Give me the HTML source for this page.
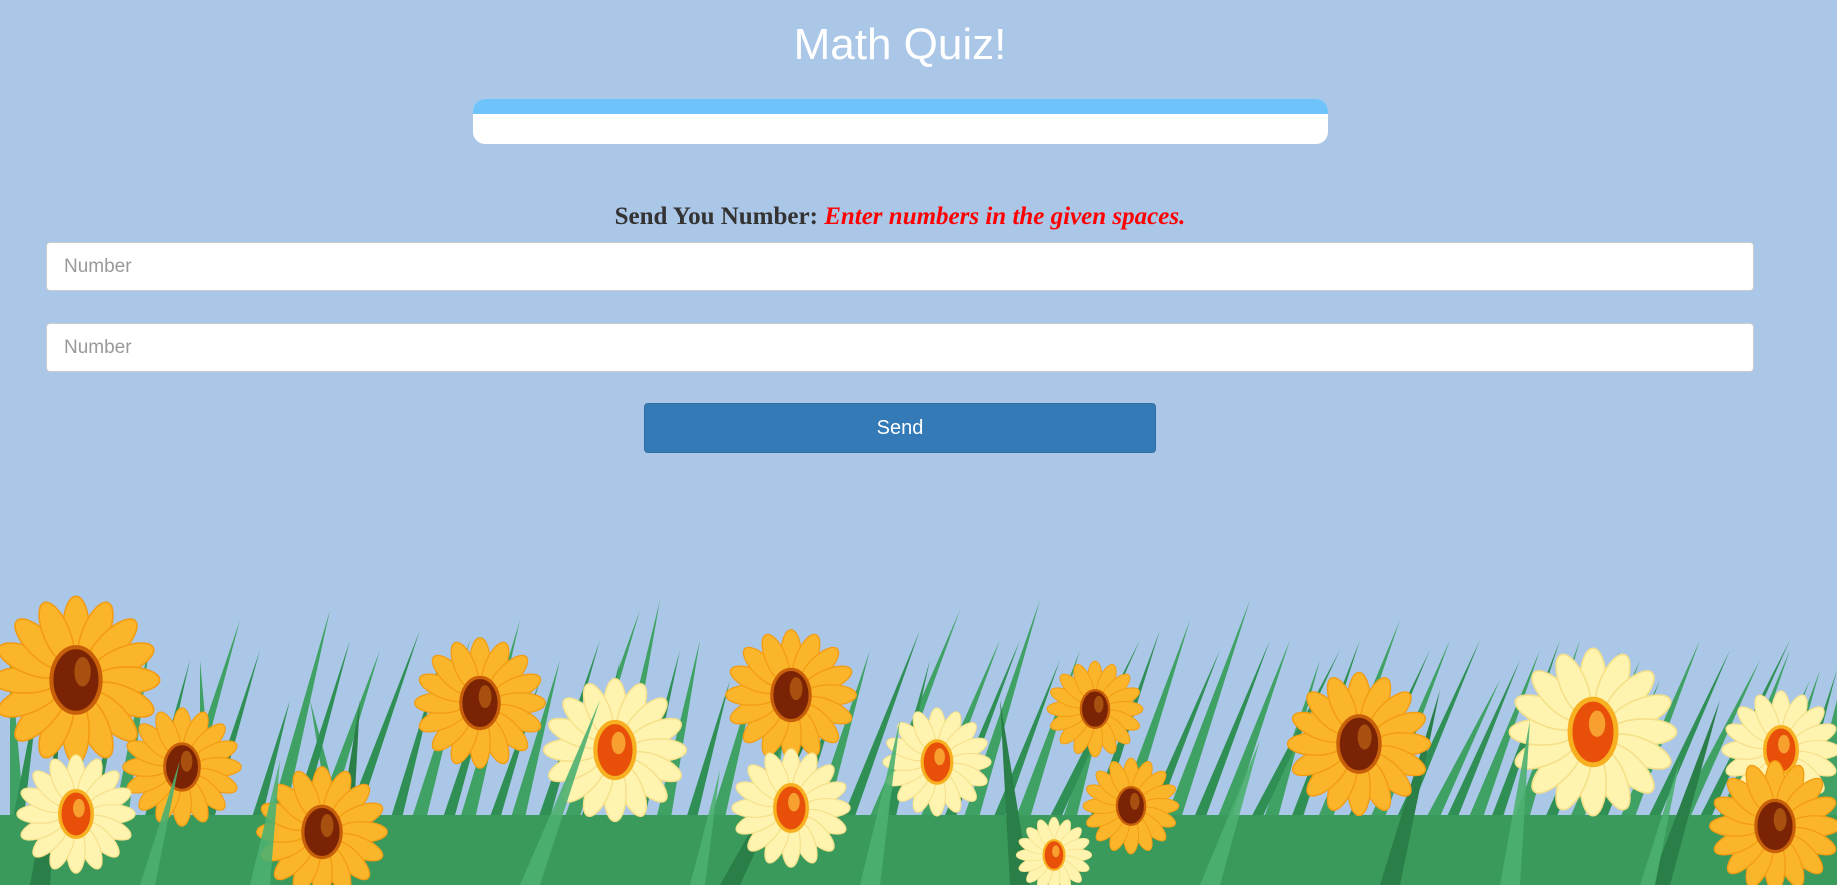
<!DOCTYPE html>
<html><head><meta charset="utf-8"><style>
html,body{margin:0;padding:0;}
body{width:1837px;height:885px;background:#abc7e8;position:relative;overflow:hidden;font-family:"Liberation Sans",Arial,sans-serif;}
h1{position:absolute;left:0;width:1800px;top:20px;margin:0;text-align:center;font-weight:normal;font-size:44px;color:#fff;line-height:50px;}
.bar{position:absolute;left:473px;top:99px;width:855px;height:45px;background:#fff;border-radius:12px;overflow:hidden;}
.bar div{height:15px;background:#6fc3fb;}
.lab{position:absolute;left:0;width:1800px;top:203px;text-align:center;font-family:"Liberation Serif",Georgia,serif;font-weight:bold;font-size:25px;color:#333;}
.lab i{color:#f00;}
.in{position:absolute;left:46px;width:1708px;height:49px;background:#fff;border:1px solid #ccc;border-radius:4px;box-sizing:border-box;font-size:19px;color:#999;padding-left:17px;line-height:47px;}
.btn{position:absolute;left:644px;top:403px;width:512px;height:50px;background:#337ab7;border:1px solid #2e6da4;border-radius:4px;box-sizing:border-box;color:#fff;font-size:20px;text-align:center;line-height:48px;}
svg{position:absolute;left:0;top:0;}
</style></head><body>
<h1>Math Quiz!</h1>
<div class="bar"><div></div></div>
<div class="lab">Send You Number: <i>Enter numbers in the given spaces.</i></div>
<div class="in" style="top:242px">Number</div>
<div class="in" style="top:323px">Number</div>
<div class="btn">Send</div>
<svg width="1837" height="885" viewBox="0 0 1837 885">
<defs>
<ellipse id="pY" cx="0" cy="-0.62" rx="0.16" ry="0.4" fill="#fbb52a" stroke="#f39c12" stroke-width="0.02"/>
<ellipse id="pW" cx="0" cy="-0.62" rx="0.16" ry="0.4" fill="#fff3b0" stroke="#f5e08a" stroke-width="0.02"/>
<g id="sun">
<use href="#pY"/><use href="#pY" transform="rotate(22.5)"/><use href="#pY" transform="rotate(45)"/><use href="#pY" transform="rotate(67.5)"/><use href="#pY" transform="rotate(90)"/><use href="#pY" transform="rotate(112.5)"/><use href="#pY" transform="rotate(135)"/><use href="#pY" transform="rotate(157.5)"/><use href="#pY" transform="rotate(180)"/><use href="#pY" transform="rotate(202.5)"/><use href="#pY" transform="rotate(225)"/><use href="#pY" transform="rotate(247.5)"/><use href="#pY" transform="rotate(270)"/><use href="#pY" transform="rotate(292.5)"/><use href="#pY" transform="rotate(315)"/><use href="#pY" transform="rotate(337.5)"/>
<ellipse rx="0.3" ry="0.4" fill="#7a2405" stroke="#c8600a" stroke-width="0.05"/>
<ellipse cx="0.08" cy="-0.1" rx="0.1" ry="0.18" fill="#a8500f"/>
</g>
<g id="dai">
<use href="#pW"/><use href="#pW" transform="rotate(22.5)"/><use href="#pW" transform="rotate(45)"/><use href="#pW" transform="rotate(67.5)"/><use href="#pW" transform="rotate(90)"/><use href="#pW" transform="rotate(112.5)"/><use href="#pW" transform="rotate(135)"/><use href="#pW" transform="rotate(157.5)"/><use href="#pW" transform="rotate(180)"/><use href="#pW" transform="rotate(202.5)"/><use href="#pW" transform="rotate(225)"/><use href="#pW" transform="rotate(247.5)"/><use href="#pW" transform="rotate(270)"/><use href="#pW" transform="rotate(292.5)"/><use href="#pW" transform="rotate(315)"/><use href="#pW" transform="rotate(337.5)"/>
<ellipse rx="0.28" ry="0.4" fill="#e8500a" stroke="#f7b020" stroke-width="0.06"/>
<ellipse cx="0.05" cy="-0.1" rx="0.1" ry="0.16" fill="#f7a030"/>
</g>
</defs>
<g fill="#3fa163">
<polygon points="10,885 10,650 30,885"/><polygon points="50,885 90,700 70,885"/><polygon points="100,885 150,640 120,885"/><polygon points="150,885 240,620 170,885"/><polygon points="200,885 200,660 220,885"/><polygon points="250,885 330,610 270,885"/><polygon points="290,885 380,650 310,885"/><polygon points="340,885 310,700 360,885"/><polygon points="390,885 470,640 410,885"/><polygon points="440,885 520,620 460,885"/><polygon points="490,885 560,660 510,885"/><polygon points="540,885 640,610 560,885"/><polygon points="590,885 660,600 610,885"/><polygon points="640,885 700,640 660,885"/><polygon points="690,885 760,660 710,885"/><polygon points="740,885 790,700 760,885"/><polygon points="790,885 870,650 810,885"/><polygon points="840,885 960,610 860,885"/><polygon points="890,885 1000,640 910,885"/><polygon points="940,885 1040,600 960,885"/><polygon points="990,885 1080,650 1010,885"/><polygon points="1040,885 1110,680 1060,885"/><polygon points="1090,885 1190,620 1110,885"/><polygon points="1140,885 1250,600 1160,885"/><polygon points="1190,885 1290,640 1210,885"/><polygon points="1240,885 1320,660 1260,885"/><polygon points="1290,885 1400,620 1310,885"/><polygon points="1340,885 1450,640 1360,885"/><polygon points="1390,885 1500,680 1410,885"/><polygon points="1440,885 1540,650 1460,885"/><polygon points="1490,885 1580,640 1510,885"/><polygon points="1540,885 1640,660 1560,885"/><polygon points="1590,885 1700,640 1610,885"/><polygon points="1640,885 1760,660 1660,885"/><polygon points="1690,885 1790,650 1710,885"/><polygon points="1740,885 1820,670 1760,885"/><polygon points="1790,885 1837,700 1837,885"/>
</g>
<g fill="#2f8f55">
<polygon points="0,885 40,680 16,885"/><polygon points="70,885 120,690 84,885"/><polygon points="125,885 190,660 140,885"/><polygon points="180,885 260,650 196,885"/><polygon points="230,885 290,700 246,885"/><polygon points="270,885 350,640 286,885"/><polygon points="320,885 420,630 336,885"/><polygon points="370,885 440,660 386,885"/><polygon points="420,885 500,650 436,885"/><polygon points="465,885 540,680 481,885"/><polygon points="515,885 600,640 531,885"/><polygon points="565,885 620,660 581,885"/><polygon points="615,885 680,650 631,885"/><polygon points="665,885 730,680 681,885"/><polygon points="715,885 820,640 731,885"/><polygon points="765,885 840,690 781,885"/><polygon points="815,885 920,630 831,885"/><polygon points="865,885 930,660 881,885"/><polygon points="915,885 1020,640 931,885"/><polygon points="965,885 1060,660 981,885"/><polygon points="1015,885 1140,640 1031,885"/><polygon points="1065,885 1160,630 1081,885"/><polygon points="1115,885 1220,650 1131,885"/><polygon points="1165,885 1270,640 1181,885"/><polygon points="1215,885 1340,650 1231,885"/><polygon points="1265,885 1360,640 1281,885"/><polygon points="1315,885 1430,650 1331,885"/><polygon points="1365,885 1480,640 1381,885"/><polygon points="1415,885 1520,660 1431,885"/><polygon points="1465,885 1560,640 1481,885"/><polygon points="1515,885 1620,650 1531,885"/><polygon points="1565,885 1660,680 1581,885"/><polygon points="1615,885 1730,650 1631,885"/><polygon points="1665,885 1790,640 1681,885"/><polygon points="1715,885 1810,680 1731,885"/><polygon points="1765,885 1837,670 1781,885"/>
</g>
<rect x="0" y="815" width="1837" height="70" fill="#3a9a5c"/>
<g fill="#2a7f48">
<polygon points="30,885 60,720 50,885"/><polygon points="330,885 360,700 350,885"/><polygon points="720,885 830,690 740,885"/><polygon points="1010,885 1000,700 1030,885"/><polygon points="1380,885 1440,690 1400,885"/><polygon points="1650,885 1720,700 1670,885"/>
</g>
<use href="#sun" transform="translate(76,680) scale(82)"/>
<use href="#sun" transform="translate(480,703) scale(64)"/>
<use href="#sun" transform="translate(791,695) scale(64)"/>
<use href="#sun" transform="translate(1095,709) scale(47)"/>
<use href="#sun" transform="translate(182,767) scale(58)"/>
<use href="#dai" transform="translate(937,762) scale(53)"/>
<use href="#dai" transform="translate(1781,750) scale(58)"/>
<use href="#dai" transform="translate(615,750) scale(70)"/>
<use href="#sun" transform="translate(1359,744) scale(70)"/>
<use href="#dai" transform="translate(1593,732) scale(82)"/>
<use href="#dai" transform="translate(76,814) scale(58)"/>
<use href="#sun" transform="translate(322,832) scale(64)"/>
<use href="#dai" transform="translate(791,808) scale(58)"/>
<use href="#sun" transform="translate(1131,806) scale(47)"/>
<use href="#dai" transform="translate(1054,855) scale(37)"/>
<use href="#sun" transform="translate(1775,826) scale(64)"/>
<g fill="#4cb070" opacity="0.9">
<polygon points="520,885 600,700 540,885"/><polygon points="860,885 900,720 880,885"/><polygon points="1200,885 1260,740 1220,885"/><polygon points="1500,885 1530,720 1520,885"/><polygon points="250,885 280,760 270,885"/><polygon points="140,885 180,760 155,885"/><polygon points="690,885 720,770 705,885"/><polygon points="1640,885 1680,760 1655,885"/>
</g>
</svg>
</body></html>
